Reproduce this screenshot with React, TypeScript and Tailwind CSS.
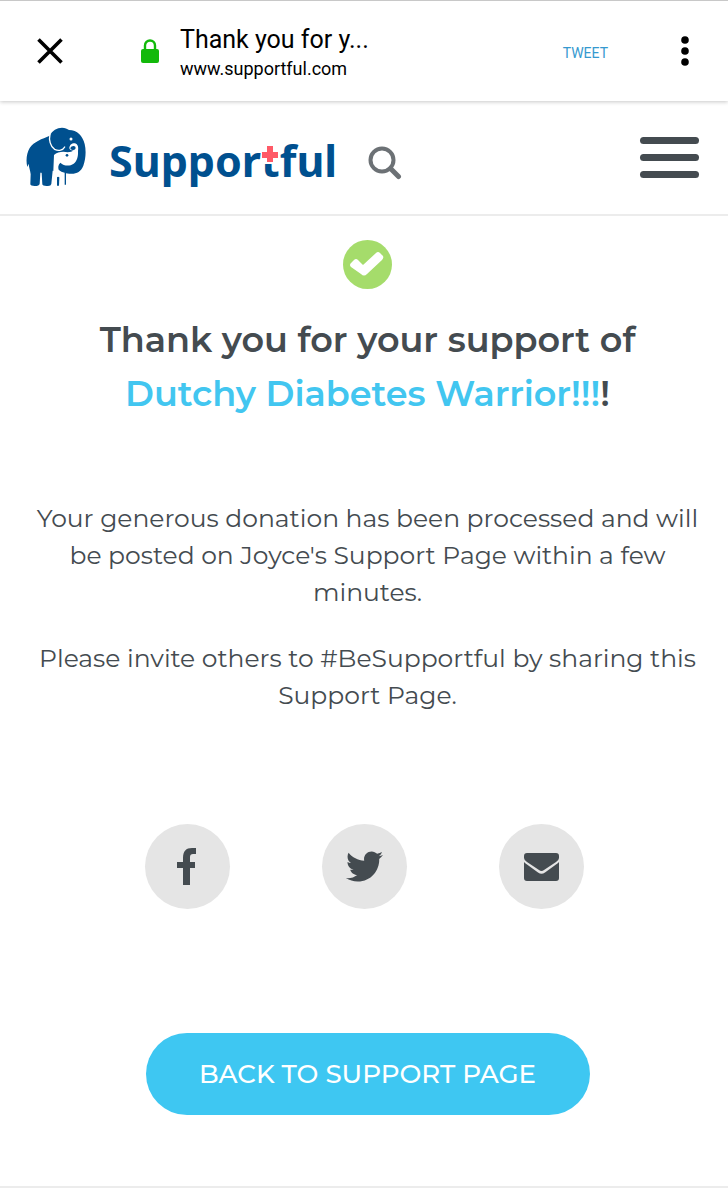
import type { ReactNode } from 'react';
import { FaTwitter } from 'react-icons/fa';

const ElephantLogo = () => (
  <svg viewBox="33 34 180 180" className="h-15 w-15 shrink-0" aria-hidden="true">
    <path
      fill="#00508f"
      d="M104 60C112 44 126 36 141 36C150 36 157 39 162 43C187 43 203 61 209 85C214 106 212 130 205 150C198 167 186 174 170 174C160 174 154 173 148 171L113 165L109 205Q108 211 99 211Q83 212 82 206L80 172Q77 168 76 173L74 204Q73 211 59 211Q47 211 46 206L47 176C46 164 42 157 41 144L37 154C32 136 35 111 44 97C57 77 81 70 104 60Z"
    />
    {/* Calf, with its trunk curling up */}
    <path
      fill="#fff"
      d="M117 118C127 108 146 107 158 110C165 110 172 108 177 104C172 106 165 104 163 98C163 88 171 82 180 83C189 86 191 95 189 106C190 122 186 137 176 144C163 153 147 151 136 141C129 147 129 156 131 162C137 168 145 171 151 173V212H147V182C145 178 137 177 133 183L132 212H113L115 165Z"
    />
    <path fill="#00508f" d="M166 98C168 92 176 89 181 93C184 99 179 104 173 103C169 103 167 101 166 98Z" />
    <path fill="none" stroke="#fff" strokeWidth="4" strokeLinecap="round" d="M105 56C101 72 106 93 119 101C131 107 144 104 149 94" />
    <circle cx="168" cy="70" r="4.500" fill="#fff" />
    <circle cx="156" cy="119" r="4" fill="#00508f" />
    <path fill="none" stroke="#00508f" strokeWidth="4" d="M151 172V207" />
    <path fill="#00508f" d="M126 185Q129 182 133 185L132 210H126Z" />
  </svg>
);

const Wordmark = () => (
  <span className="pt-2 font-['Noto_Sans',sans-serif] text-[43px] leading-[60px] font-bold text-[#00508f]">
    Suppor
    <span className="relative">
      t
      {/* Red cross sits over the top of the t */}
      <svg viewBox="0 0 18 20" className="absolute top-[13px] left-0 h-5 w-[18px]" aria-hidden="true">
        <path fill="#fff" d="M0 0h18v20H0z" />
        <path fill="#ff5a67" d="M6 2h6v6h5v6h-5v4H6v-4H1V8h5z" />
      </svg>
    </span>
    ful
  </span>
);

const ShareButton = ({ label, children }: { label: string; children: ReactNode }) => (
  <button
    type="button"
    aria-label={label}
    className="flex h-[85px] w-[85px] items-center justify-center rounded-full bg-[#e5e5e5] text-[#444b50]"
  >
    {children}
  </button>
);

const BrowserBar = () => (
  <header className="flex h-[101px] items-center border-t border-[#c8c8c8] bg-white pr-[38px] pl-9 font-[Roboto,sans-serif] text-black shadow-[0_1px_4px_rgba(0,0,0,0.22)]">
    <button type="button" aria-label="Close" className="h-7 w-7">
      <svg viewBox="0 0 28 28" fill="none" stroke="currentColor" strokeWidth="3.6">
        <path d="M2.5 2.5l23 23M25.5 2.5l-23 23" />
      </svg>
    </button>
    <svg viewBox="0 0 20 25" className="ml-19 h-[25px] w-5 shrink-0" aria-hidden="true">
      <rect x="1" y="10" width="18" height="14" rx="2" fill="#12b90b" />
      <path fill="none" stroke="#12b90b" strokeWidth="2.4" d="M5 11V6.500a5 5 0 0 1 10 0V11" />
    </svg>
    <div className="ml-5 min-w-0 flex-1 pt-1">
      <div className="truncate text-[25px] leading-[32px]">Thank you for y...</div>
      <div className="text-lg leading-[26px]">www.supportful.com</div>
    </div>
    <button type="button" className="mr-18 pt-1 text-sm text-[#3599cf]">TWEET</button>
    <button type="button" aria-label="More">
      <svg viewBox="0 0 10 30" className="h-[30px] w-[10px]" fill="currentColor">
        <circle cx="5" cy="4" r="3.800" />
        <circle cx="5" cy="15" r="3.800" />
        <circle cx="5" cy="26" r="3.800" />
      </svg>
    </button>
  </header>
);

const SiteNav = () => (
  <nav className="flex h-[115px] items-center border-b-2 border-[#ececec] pr-[29px] pb-px pl-[26px]">
    <a href="#home" aria-label="Supportful" className="flex items-center gap-[23px]">
      <ElephantLogo />
      <Wordmark />
    </a>
    <button type="button" aria-label="Search" className="mt-3 ml-[31px]">
      <svg viewBox="0 0 34 34" className="h-[34px] w-[34px]" fill="none" stroke="#6c7175">
        <circle cx="14" cy="14" r="11.500" strokeWidth="4" />
        <path d="M22.500 22.500l8 8" strokeWidth="5" strokeLinecap="round" />
      </svg>
    </button>
    <button type="button" aria-label="Menu" className="ml-auto flex w-[59px] flex-col gap-[10px]">
      <span className="h-[7px] rounded-full bg-[#444b50]" />
      <span className="h-[7px] rounded-full bg-[#444b50]" />
      <span className="h-[7px] rounded-full bg-[#444b50]" />
    </button>
  </nav>
);

export default function App() {
  return (
    <div className="min-h-screen bg-white font-[Montserrat,Inter,sans-serif] text-[#444b50]">
      <BrowserBar />
      <SiteNav />

      <main className="flex flex-col items-center border-b-2 border-[#ececec] pt-6 pr-7 pb-[71px] pl-[35px] text-center">
        <svg viewBox="0 0 49 49" className="h-[49px] w-[49px]" aria-hidden="true">
          <circle cx="24.500" cy="24.500" r="24.500" fill="#a5dc6b" />
          <path
            fill="#fff"
            d="M8 23L11 20Q13 18 15 20L20 25L33 13Q35 11 37 13L40 16Q41 18 39 20L24 34Q21 37 18 34L8 27Q6 25 8 23Z"
          />
        </svg>

        <h1 className="mt-6 text-[35px] leading-[54px] font-semibold">
          Thank you for your support of
          <br />
          <a href="#campaign" className="text-[#42c6f0]">Dutchy Diabetes Warrior!!!</a>!
        </h1>

        <div className="mt-[79px] flex flex-col gap-[29px] text-[25px] leading-[37px]">
          <p>
            Your generous donation has been processed and will be posted on Joyce's Support Page within a few minutes.
          </p>
          <p>Please invite others to #BeSupportful by sharing this Support Page.</p>
        </div>

        {/* Share links */}
        <div className="mt-[110px] mr-[7px] flex gap-[92px]">
          <ShareButton label="Share on Facebook">
            <svg viewBox="0 0 20 37" className="h-[37px] w-5" fill="currentColor">
              <path d="M6 37V20H0v-6h6V10C6 3 9 0 15 0h4v6h-3c-2 0-3 1-3 3v5h5v6h-5v17z" />
            </svg>
          </ShareButton>
          <ShareButton label="Share on Twitter">
            <FaTwitter className="h-[37px] w-[37px]" />
          </ShareButton>
          <ShareButton label="Share by email">
            <svg viewBox="0 0 35 28" className="h-7 w-[35px]" fill="currentColor">
              <path d="M3 0h29q3 0 3 3v2q0 2-3 4L20 17q-2.500 2-5 0L3 9Q0 7 0 5V3q0-3 3-3z" />
              <path d="M0 9q1 1 3 2.500L14 19.500q3.500 2.500 7 0l11-8Q34 10 35 9v16q0 3-3 3H3q-3 0-3-3z" />
            </svg>
          </ShareButton>
        </div>

        <button
          type="button"
          className="mt-[124px] h-[82px] w-[444px] rounded-full bg-[#3ec7f2] pt-px text-[26px] font-medium text-white"
        >
          BACK TO SUPPORT PAGE
        </button>
      </main>
    </div>
  );
}
